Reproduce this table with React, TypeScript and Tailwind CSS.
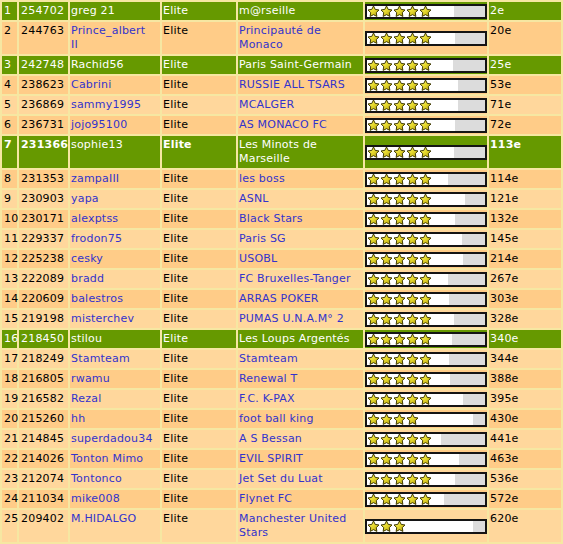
import React from "react";

type Row = {
  rank: string;
  id: string;
  name: string[];
  team: string[];
  pos: string;
  stars: number;
  fill: number;
  green?: boolean;
  bold?: boolean;
};

const rows: Row[] = [
  { rank: "1", id: "254702", name: ["greg 21"], team: ["m@rseille"], pos: "2e", stars: 5, fill: 87, green: true },
  { rank: "2", id: "244763", name: ["Prince_albert", "II"], team: ["Principauté de", "Monaco"], pos: "20e", stars: 5, fill: 88 },
  { rank: "3", id: "242748", name: ["Rachid56"], team: ["Paris Saint-Germain"], pos: "25e", stars: 5, fill: 86, green: true },
  { rank: "4", id: "238623", name: ["Cabrini"], team: ["RUSSIE ALL TSARS"], pos: "53e", stars: 5, fill: 91 },
  { rank: "5", id: "236869", name: ["sammy1995"], team: ["MCALGER"], pos: "71e", stars: 5, fill: 91 },
  { rank: "6", id: "236731", name: ["jojo95100"], team: ["AS MONACO FC"], pos: "72e", stars: 5, fill: 88 },
  { rank: "7", id: "231366", name: ["sophie13"], team: ["Les Minots de", "Marseille"], pos: "113e", stars: 5, fill: 87, green: true, bold: true },
  { rank: "8", id: "231353", name: ["zampaIII"], team: ["les boss"], pos: "114e", stars: 5, fill: 81 },
  { rank: "9", id: "230903", name: ["yapa"], team: ["ASNL"], pos: "121e", stars: 5, fill: 98 },
  { rank: "10", id: "230171", name: ["alexptss"], team: ["Black Stars"], pos: "132e", stars: 5, fill: 88 },
  { rank: "11", id: "229337", name: ["frodon75"], team: ["Paris SG"], pos: "145e", stars: 5, fill: 95 },
  { rank: "12", id: "225238", name: ["cesky"], team: ["USOBL"], pos: "214e", stars: 5, fill: 96 },
  { rank: "13", id: "222089", name: ["bradd"], team: ["FC Bruxelles-Tanger"], pos: "267e", stars: 5, fill: 81 },
  { rank: "14", id: "220609", name: ["balestros"], team: ["ARRAS POKER"], pos: "303e", stars: 5, fill: 82 },
  { rank: "15", id: "219198", name: ["misterchev"], team: ["PUMAS U.N.A.M° 2"], pos: "328e", stars: 5, fill: 87 },
  { rank: "16", id: "218450", name: ["stilou"], team: ["Les Loups Argentés"], pos: "340e", stars: 5, fill: 85, green: true },
  { rank: "17", id: "218249", name: ["Stamteam"], team: ["Stamteam"], pos: "344e", stars: 5, fill: 82 },
  { rank: "18", id: "216805", name: ["rwamu"], team: ["Renewal T"], pos: "388e", stars: 5, fill: 83 },
  { rank: "19", id: "216582", name: ["Rezal"], team: ["F.C. K-PAX"], pos: "395e", stars: 5, fill: 96 },
  { rank: "20", id: "215260", name: ["hh"], team: ["foot ball king"], pos: "430e", stars: 4, fill: 106 },
  { rank: "21", id: "214845", name: ["superdadou34"], team: ["A S Bessan"], pos: "441e", stars: 5, fill: 74 },
  { rank: "22", id: "214026", name: ["Tonton Mimo"], team: ["EVIL SPIRIT"], pos: "463e", stars: 5, fill: 92 },
  { rank: "23", id: "212074", name: ["Tontonco"], team: ["Jet Set du Luat"], pos: "536e", stars: 5, fill: 88 },
  { rank: "24", id: "211034", name: ["mike008"], team: ["Flynet FC"], pos: "572e", stars: 5, fill: 77 },
  { rank: "25", id: "209402", name: ["M.HIDALGO"], team: ["Manchester United", "Stars"], pos: "620e", stars: 3, fill: 106 },
];

function Star() {
  return (
    <svg width="13" height="13" viewBox="0 0 26 24" className="block shrink-0">
      <defs>
        <linearGradient id="sg" x1="0" y1="0" x2="1" y2="1">
          <stop offset="0" stopColor="#fbf68a" />
          <stop offset="0.45" stopColor="#e9dc30" />
          <stop offset="1" stopColor="#b4a10c" />
        </linearGradient>
      </defs>
      <polygon
        points="13,1 16.41,7.81 23.94,8.95 18.52,14.29 19.76,21.8 13,18.3 6.24,21.8 7.48,14.29 2.06,8.95 9.59,7.81"
        fill="url(#sg)"
        stroke="#3f3900"
        strokeWidth="2"
        strokeLinejoin="round"
      />
    </svg>
  );
}

function Bar({ stars, fill }: { stars: number; fill: number }) {
  return (
    <div className="relative w-[122px] h-[15px] border-2 border-[#141414] bg-[#dcdcdc]">
      <div className="h-full bg-white" style={{ width: `${fill}px` }} />
      <div className="absolute left-[0px] top-[-1px] flex">
        {Array.from({ length: stars }).map((_, i) => (
          <Star key={i} />
        ))}
      </div>
    </div>
  );
}

export default function App() {
  return (
    <div
      className="w-[563px] h-[544px] overflow-hidden bg-[#f6e7a2] p-[2px] flex flex-col gap-[2px] text-[11px] leading-[14px] tracking-[0.2px]"
      style={{ fontFamily: '"DejaVu Sans", Verdana, sans-serif' }}
    >
      {rows.map((r, idx) => {
        const n = idx + 1;
        const bg = r.green ? "bg-[#669900]" : n % 2 === 0 ? "bg-[#ffcc88]" : "bg-[#ffd79c]";
        const plain = r.green ? "text-white" : "text-black";
        const link = r.green ? "text-white" : "text-[#3333cc]";
        const b = r.bold ? "font-bold" : "";
        const cell = `${bg} px-[2px] py-[2px] whitespace-nowrap`;
        return (
          <div key={r.rank} className="flex gap-[2px]">
            <div className={`${cell} w-[15px] ${plain} ${b}`}>{r.rank}</div>
            <div className={`${cell} w-[49px] ${plain} ${b}`}>{r.id}</div>
            <div className={`${cell} w-[90px] ${link} pl-[1px]`}>
              {r.name.map((l, i) => (
                <div key={i}>{l}</div>
              ))}
            </div>
            <div className={`${cell} w-[74px] ${plain} ${b} pl-[1px]`}>Elite</div>
            <div className={`${cell} w-[125px] ${link} pl-[1px]`}>
              {r.team.map((l, i) => (
                <div key={i}>{l}</div>
              ))}
            </div>
            <div className={`${bg} w-[122px] flex items-center`}>
              <Bar stars={r.stars} fill={r.fill} />
            </div>
            <div className={`${cell} w-[72px] ${plain} ${b} pl-[1px]`}>{r.pos}</div>
          </div>
        );
      })}
    </div>
  );
}
